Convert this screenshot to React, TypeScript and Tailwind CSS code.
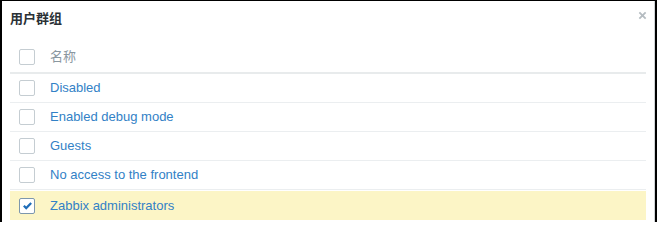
import React from "react"

const groups = [
  { name: "Disabled", checked: false },
  { name: "Enabled debug mode", checked: false },
  { name: "Guests", checked: false },
  { name: "No access to the frontend", checked: false },
  { name: "Zabbix administrators", checked: true },
]

function Checkbox({ checked }: { checked: boolean }) {
  return (
    <span
      className={
        "flex h-[16px] w-[16px] items-center justify-center rounded-[2px] border bg-white " +
        (checked ? "border-[#7d97ad]" : "border-[#c5cdd2]")
      }
    >
      {checked && (
        <svg viewBox="0 0 12 12" className="h-[11px] w-[11px]">
          <path d="M2 6.2l2.6 2.6L10 3.3" fill="none" stroke="#1f6db8" strokeWidth="2.4" />
        </svg>
      )}
    </span>
  )
}

export default function App() {
  return (
    <div
      className="h-[222px] w-[657px] overflow-hidden bg-black pl-[2px] pr-[2px] pt-[1px]"
      style={{ fontFamily: '"Liberation Sans", Arial, "Noto Sans CJK SC", sans-serif' }}
    >
      <div className="h-full border-r border-[#d0d4d6] bg-white">
        <div className="flex h-[40px] items-start justify-between pl-[8px] pr-[7px] pt-[10px]">
          <h2 className="text-[13px] font-bold leading-[16px] text-[#2b3136]">用户群组</h2>
          <svg viewBox="0 0 10 10" className="h-[9px] w-[9px]">
            <path d="M1.5 1.5l7 7M8.5 1.5l-7 7" stroke="#b5bcc1" strokeWidth="2" />
          </svg>
        </div>
        <div className="ml-[8px] mr-[8px] text-[13px]">
          <div className="flex h-[33px] items-center gap-[15px] border-b-2 border-[#e8ebec] pl-[9px]">
            <Checkbox checked={false} />
            <span className="text-[#8a979f]">名称</span>
          </div>
          {groups.map((g) => (
            <div
              key={g.name}
              className={
                "flex h-[29px] items-center gap-[15px] pl-[9px] " +
                (g.checked ? "mt-px bg-[#fcf5c6]" : "border-b border-[#ebeef0]")
              }
            >
              <Checkbox checked={g.checked} />
              <span className="text-[#3281c6]">{g.name}</span>
            </div>
          ))}
        </div>
      </div>
    </div>
  )
}
